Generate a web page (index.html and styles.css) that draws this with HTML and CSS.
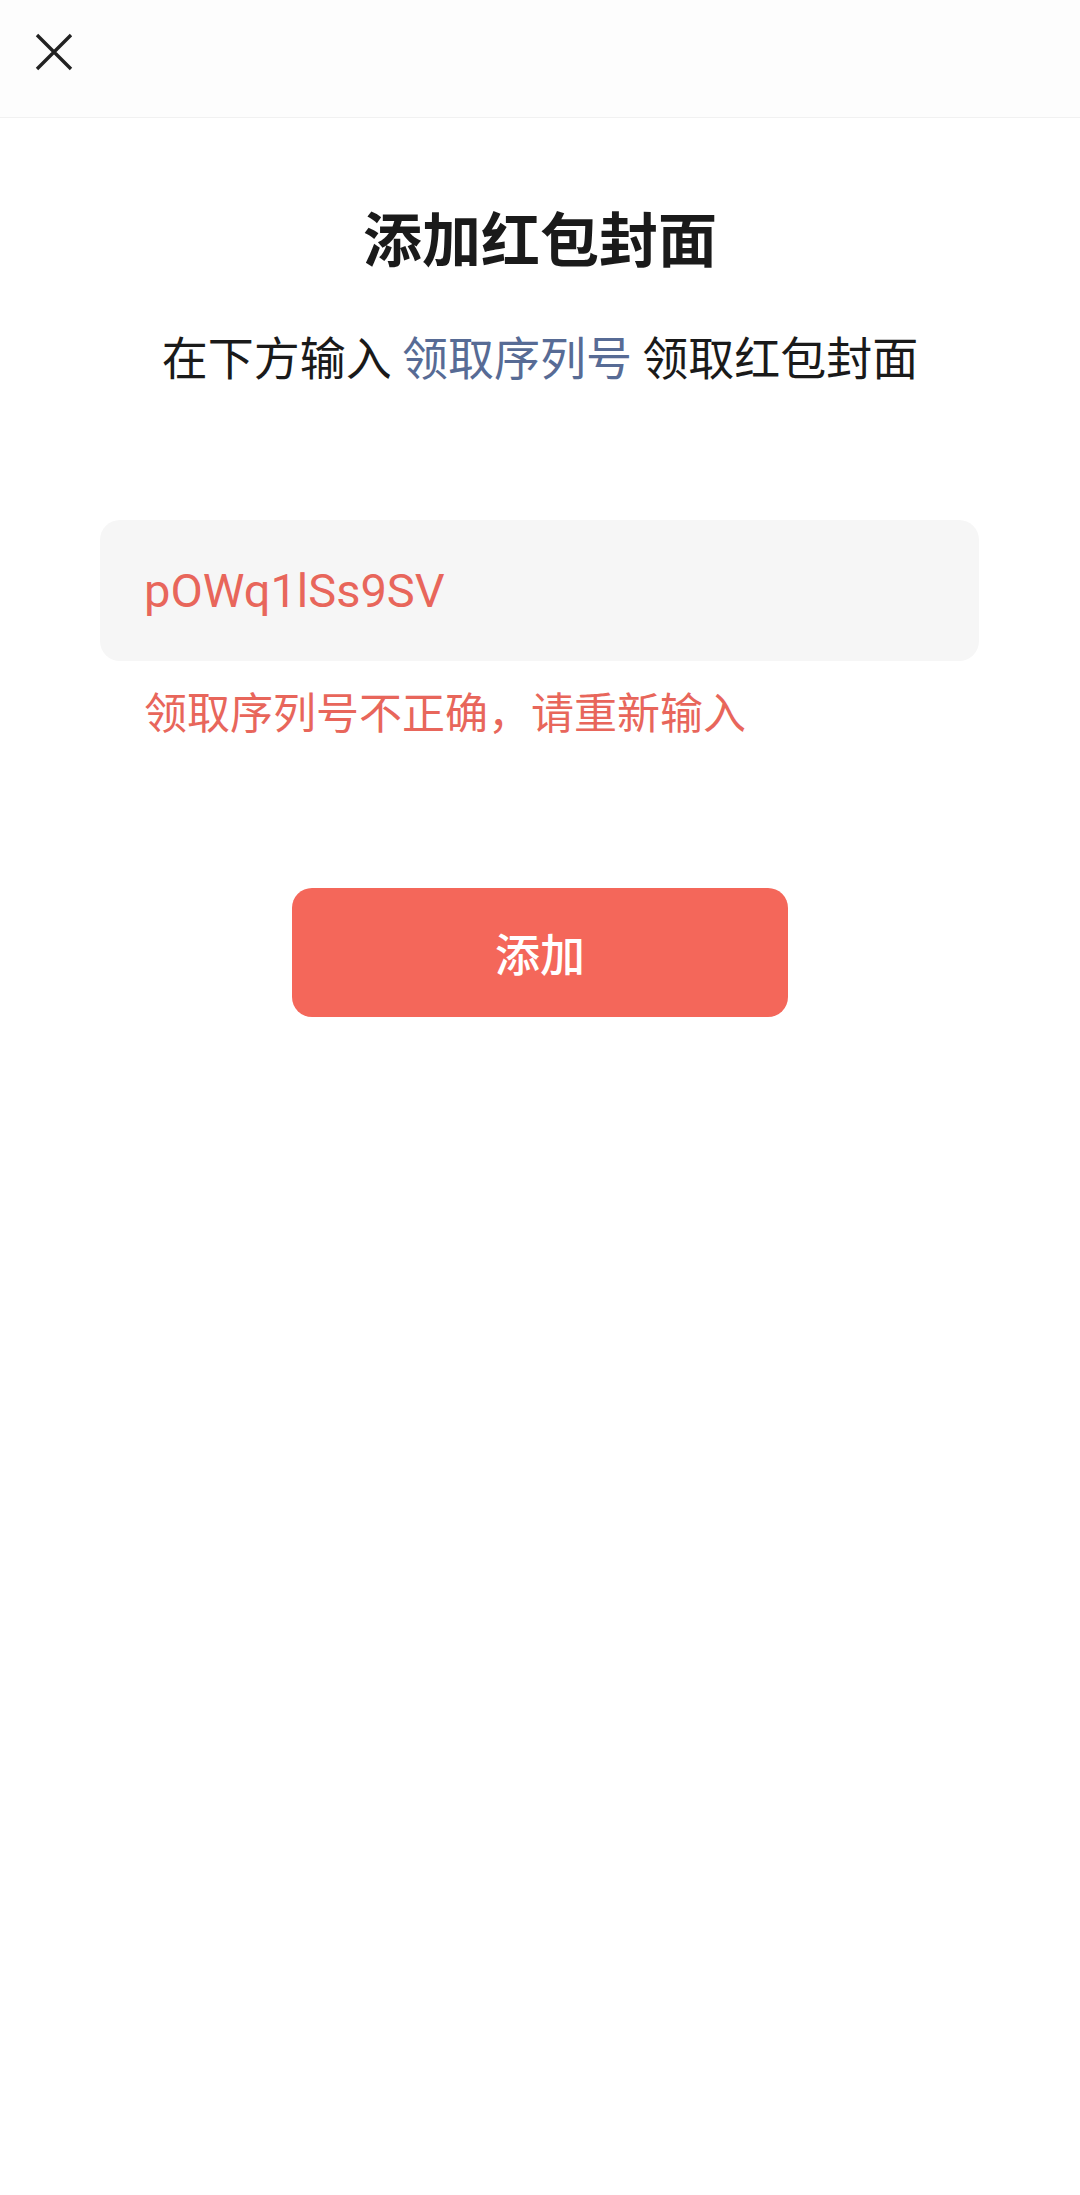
FILE: index.html
```html
<!DOCTYPE html>
<html lang="zh-CN">
<head>
<meta charset="utf-8">
<title>添加红包封面</title>
<link rel="stylesheet" href="styles.css">
</head>
<body>
  <header class="topbar">
    <button class="close-btn" aria-label="关闭">
      <svg class="close-icon" viewBox="0 0 38 38" width="38" height="38" aria-hidden="true">
        <path d="M2 2 L36 36 M36 2 L2 36" fill="none" stroke="#222222" stroke-width="3.4" stroke-linecap="butt"/>
      </svg>
    </button>
  </header>

  <main class="content">
    <h1 class="title">添加红包封面</h1>
    <p class="subtitle">在下方输入 <span class="link">领取序列号</span> 领取红包封面</p>

    <div class="field">
      <input class="code-input" type="text" value="pOWq1lSs9SV" aria-label="领取序列号">
    </div>
    <p class="error">领取序列号不正确，请重新输入</p>

    <button class="add-btn">添加</button>
  </main>
</body>
</html>
```

FILE: styles.css
```css
html, body {
  margin: 0;
  padding: 0;
  background: #ffffff;
}

body {
  font-family: "Noto Sans CJK SC", "Noto Sans", sans-serif;
  color: #191919;
}

.topbar {
  height: 117px;
  background: #fdfdfd;
  border-bottom: 1px solid #f1f1f1;
  display: flex;
  align-items: center;
  padding-left: 35px;
}

.close-btn {
  border: none;
  background: none;
  padding: 0;
  margin: 0;
  width: 38px;
  height: 38px;
  display: flex;
  align-items: center;
  justify-content: center;
  margin-top: -13px;
}

.close-icon {
  display: block;
}

.content {
  display: flex;
  flex-direction: column;
  align-items: center;
}

.title {
  margin: 84px 0 0;
  font-size: 59px;
  line-height: 70px;
  font-weight: 700;
  color: #1a1a1a;
  letter-spacing: 0;
}

.subtitle {
  margin: 55px 0 0;
  font-size: 46px;
  line-height: 56px;
  font-weight: 400;
  color: #1a1a1a;
}

.link {
  color: #576b95;
}

.field {
  margin-top: 137px;
  width: 879px;
  height: 141px;
  box-sizing: border-box;
  background: #f6f6f6;
  border-radius: 20px;
  display: flex;
  align-items: center;
  padding: 0 44px;
  align-self: flex-start;
  margin-left: 100px;
}

.code-input {
  width: 100%;
  border: none;
  outline: none;
  background: transparent;
  padding: 0;
  margin: 0;
  font-family: Roboto, "Noto Sans", sans-serif;
  font-size: 47px;
  line-height: 60px;
  color: #e8665b;
}

.error {
  margin: 23px 0 0 144px;
  align-self: flex-start;
  font-size: 43px;
  line-height: 52px;
  color: #e8665b;
}

.add-btn {
  margin-top: 152px;
  width: 496px;
  height: 129px;
  border: none;
  border-radius: 20px;
  background: #f4675a;
  color: #ffffff;
  font-family: "Noto Sans CJK SC", "Noto Sans", sans-serif;
  font-size: 45px;
  font-weight: 500;
  padding: 0;
}
```
